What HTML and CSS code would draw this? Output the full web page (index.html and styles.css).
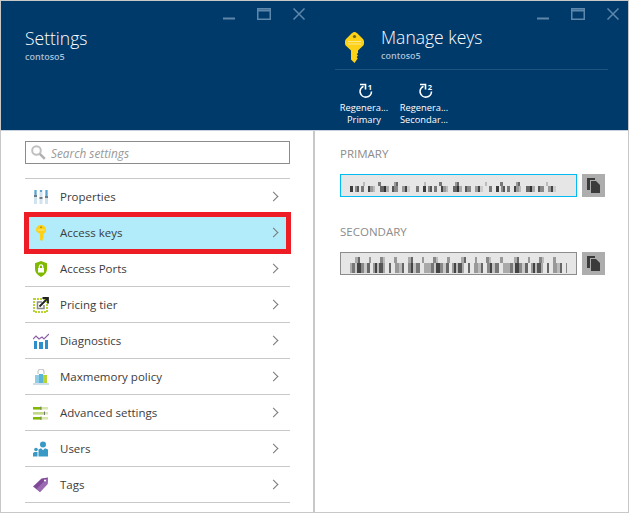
FILE: index.html
```html
<!DOCTYPE html>
<html lang="en">
<head>
<meta charset="UTF-8">
<title>Manage keys</title>
<link rel="stylesheet" href="styles.css">
</head>
<body>
<div class="portal">

  <section class="blade blade-settings">
    <header class="blade-head">
      <div class="win-btns">
        <svg width="12" height="12" viewBox="0 0 12 12"><path d="M0 10.5h12" stroke="#5d87ab" stroke-width="2"/></svg>
        <svg width="14" height="12" viewBox="0 0 14 12"><path d="M.75.75h12.5v10.5H.75z" fill="none" stroke="#5d87ab" stroke-width="1.5"/><path d="M1 2.5h12" stroke="#5d87ab" stroke-width="2"/></svg>
        <svg width="12" height="12" viewBox="0 0 12 12"><path d="M.5.5l11 11M11.5.5l-11 11" stroke="#5d87ab" stroke-width="1.5"/></svg>
      </div>
      <h1>Settings</h1>
      <p class="sub">contoso5</p>
    </header>
    <div class="blade-body">
      <div class="search">
        <svg width="15" height="15" viewBox="0 0 15 15"><circle cx="5.500" cy="5.500" r="4.300" fill="none" stroke="#c0c0c0" stroke-width="2"/><path d="M8.800 8.800l5 5" stroke="#b0b0b0" stroke-width="2.500"/></svg>
        <span>Search settings</span>
      </div>
      <ul class="menu">
        <li><svg width="16" height="16" viewBox="0 0 16 16"><path d="M2.500 1v14M8 1v14M13.500 1v14" stroke="#cfe4ef" stroke-width="3"/><path d="M2.500 1v5M8 1v2M13.500 1v6" stroke="#59a5d0" stroke-width="2"/><path d="M1 7h3M6.500 9h3M12 8h3" stroke="#505a62" stroke-width="1.500"/></svg><span>Properties</span></li>
        <li class="active"><svg width="16" height="16" viewBox="0 0 16 16"><path d="M8 0a5 5 0 0 1 5 5c0 1.800-1 3-2.500 3.800V13L9.500 14l.5 1-1.500 1L7 14.800V8.800C5 8 3 6.800 3 5a5 5 0 0 1 5-5z" fill="#fcd116"/><circle cx="8" cy="2.300" r=".8" fill="#8a7514"/><path d="M4.500 5h7" stroke="#fee88a"/></svg><span>Access keys</span></li>
        <li><svg width="16" height="16" viewBox="0 0 16 16"><path d="M8 0l6 2.200V8c0 3.500-3 6.500-6 8-3-1.500-6-4.500-6-8V2.200z" fill="#7fba00"/><rect x="5" y="7" width="6" height="4.500" fill="#fff"/><path d="M6.300 7V5.500a1.700 1.700 0 0 1 3.400 0V7" fill="none" stroke="#fff" stroke-width="1.200"/></svg><span>Access Ports</span></li>
        <li><svg width="16" height="16" viewBox="0 0 16 16"><path d="M1 2h13v13H1z" fill="none" stroke="#b8d432" stroke-width="2" stroke-dasharray="2 1"/><path d="M9 5H4.500v6.500H11V8" fill="none" stroke="#8a8a8a" stroke-width="1.500"/><path d="M6.500 9.500L14 2M9.500 1H15v5.500" fill="none" stroke="#222" stroke-width="1.800"/></svg><span>Pricing tier</span></li>
        <li><svg width="16" height="16" viewBox="0 0 16 16"><path d="M1 8h3v8H1zM6 9h4v7H6zM12 7h3v9h-3z" fill="#2f8fca"/><path d="M0 6l3-3 3 3 3-2 2 2 5-5" fill="none" stroke="#8c5fa8" stroke-width="1.200"/></svg><span>Diagnostics</span></li>
        <li><svg width="16" height="16" viewBox="0 0 16 16"><path d="M5 5V3a3 3 0 0 1 6 0v2" fill="none" stroke="#c8c8c8" stroke-width="1.300"/><path d="M0 14h16v2H0z" fill="#cfdfe8"/><path d="M2 6h4v8H2z" fill="#8fcde6"/><path d="M6 5h4v9H6z" fill="#59b4d9"/><path d="M10 6h4v8h-4z" fill="#b8d432"/></svg><span>Maxmemory policy</span></li>
        <li><svg width="16" height="16" viewBox="0 0 16 16"><path d="M0 2h15v2.500H0zM0 7h15v2.500H0zM0 12h15v2.500H0z" fill="#d9e6b0"/><path d="M0 2h8v2.500H0zM0 12h8v2.500H0z" fill="#7fba00"/><path d="M0 7h11v2.500H0z" fill="#c3d98a"/><path d="M8 1.500v3.500M11.500 6.500v3.500M8 11.500v3.500" stroke="#777"/></svg><span>Advanced settings</span></li>
        <li><svg width="16" height="16" viewBox="0 0 16 16"><circle cx="10" cy="3.500" r="3" fill="#3999c6"/><path d="M5.500 15.500V8.500l2.500-1.200 2 2 2-2 3 1.200v7z" fill="#3999c6"/><circle cx="3" cy="8.500" r="1.800" fill="#3999c6"/><path d="M0 15.500V12l1.500-1h3v4.500z" fill="#3999c6"/></svg><span>Users</span></li>
        <li><svg width="16" height="16" viewBox="0 0 16 16"><path d="M0 9.500L8.500 1.500 15 .5l-.5 6.500L7 15z" fill="#804998"/><path d="M15 .5l-.5 6.500L7 15 3.500 12z" fill="#9b6bb0"/><circle cx="12" cy="3.500" r="1.100" fill="#fff"/></svg><span>Tags</span></li>
      </ul>
    </div>
  </section>

  <section class="blade blade-keys">
    <header class="blade-head">
      <div class="win-btns">
        <svg width="12" height="12" viewBox="0 0 12 12"><path d="M0 10.5h12" stroke="#5d87ab" stroke-width="2"/></svg>
        <svg width="14" height="12" viewBox="0 0 14 12"><path d="M.75.75h12.5v10.5H.75z" fill="none" stroke="#5d87ab" stroke-width="1.5"/><path d="M1 2.5h12" stroke="#5d87ab" stroke-width="2"/></svg>
        <svg width="12" height="12" viewBox="0 0 12 12"><path d="M.5.5l11 11M11.5.5l-11 11" stroke="#5d87ab" stroke-width="1.5"/></svg>
      </div>
      <div class="title-row">
        <svg width="19" height="31" viewBox="0 0 19 31"><path d="M9.500 0c1 0 2 .6 3 1.600l5.500 5.400c.7.700 1 1.500 1 2.500v2c0 1.200-.6 2-1.500 2.800L13 18.500V21l-1.300 1.300L13 23.500 11.700 25l1 1.400L9.500 31 6 27.500v-9l-4.500-4.200C.6 13.500 0 12.700 0 11.500v-2c0-1 .3-1.800 1-2.500l5.500-5.400c1-1 2-1.600 3-1.600z" fill="#fcd116"/><circle cx="9.500" cy="4.500" r="1.600" fill="#6f6420"/><path d="M3 9.500h13M3 12h13" stroke="#fee88a"/></svg>
        <div>
          <h1>Manage keys</h1>
          <p class="sub">contoso5</p>
        </div>
      </div>
      <div class="commands">
        <div class="cmd">
          <span class="cmd-icon"><svg width="14" height="15" viewBox="0 0 14 15"><path d="M12.500 8.500A5.700 5.700 0 1 1 4.500 3.200" fill="none" stroke="#fff" stroke-width="1.600"/><path d="M1 1.500h5.500v5" fill="none" stroke="#fff" stroke-width="1.600"/></svg><b>1</b></span>
          <span>Regenera...</span>
          <span>Primary</span>
        </div>
        <div class="cmd">
          <span class="cmd-icon"><svg width="14" height="15" viewBox="0 0 14 15"><path d="M12.500 8.500A5.700 5.700 0 1 1 4.500 3.200" fill="none" stroke="#fff" stroke-width="1.600"/><path d="M1 1.500h5.500v5" fill="none" stroke="#fff" stroke-width="1.600"/></svg><b>2</b></span>
          <span>Regenera...</span>
          <span>Secondar...</span>
        </div>
      </div>
    </header>
    <div class="blade-body keys-body">
      <div class="key-group">
        <label>PRIMARY</label>
        <div class="key-row">
          <div class="key-box focus"><i class="blur"></i></div>
          <button class="copy"><svg width="13" height="15" viewBox="0 0 13 15"><path d="M0 0h8v2H3v10H0z" fill="#3b3b3b"/><path d="M4 3h5l4 4v8H4z" fill="#3b3b3b"/></svg></button>
        </div>
      </div>
      <div class="key-group">
        <label>SECONDARY</label>
        <div class="key-row">
          <div class="key-box"><i class="blur blur-2"></i></div>
          <button class="copy"><svg width="13" height="15" viewBox="0 0 13 15"><path d="M0 0h8v2H3v10H0z" fill="#3b3b3b"/><path d="M4 3h5l4 4v8H4z" fill="#3b3b3b"/></svg></button>
        </div>
      </div>
    </div>
  </section>

</div>
</body>
</html>
```

FILE: styles.css
```css
* {
    box-sizing: border-box;
}
html, body {
    margin: 0;
    padding: 0;
}
body {
    width: 629px;
    height: 514px;
    overflow: hidden;
    background: #fff;
    font-family: "Open Sans", "Noto Sans", sans-serif;
}
.portal {
    display: flex;
    height: 513px;
    border: 1px solid #c8c8c8;
}
.blade {
    display: flex;
    flex-direction: column;
}
.blade-settings {
    flex: none;
    width: 314px;
    border-right: 2px solid #c8c8c8;
}
.blade-keys {
    flex: 1;
    min-width: 0;
}
.blade-head {
    position: relative;
    height: 130px;
    background: #003a6b;
    border-bottom: 1px solid #c6d2dd;
    color: #fff;
    padding: 25px 0 0 24px;
}
.blade-settings .blade-head {
    margin-right: -2px;
}
.blade-keys .blade-head {
    padding: 24px 20px 0 20px;
}
.win-btns {
    position: absolute;
    top: 7px;
    right: 9px;
    display: flex;
    gap: 22px;
}
.blade-settings .win-btns {
    right: 10px;
}
h1 {
    margin: 0;
    font-size: 17.5px;
    font-weight: 300;
    line-height: 24px;
}
.sub {
    margin: 1px 0 0;
    font-size: 9px;
    line-height: 12px;
    font-weight: 600;
    color: #a9bfd2;
}
.title-row {
    display: flex;
    gap: 17px;
    padding-left: 10px;
    align-items: flex-start;
    height: 44px;
}
.title-row svg {
    margin-top: 7px;
}
.commands {
    display: flex;
    gap: 8px;
    border-top: 1px solid #1d5480;
    padding: 13px 0 0 3px;
}
.cmd {
    width: 52px;
    display: flex;
    flex-direction: column;
    align-items: center;
    font-size: 9.3px;
    line-height: 12px;
    white-space: nowrap;
}
.cmd-icon {
    display: flex;
    height: 15px;
    margin-bottom: 4px;
    margin-left: 3px;
}
.cmd-icon b {
    font-size: 7.5px;
    line-height: 8px;
    margin-left: -5px;
}
.blade-body {
    flex: 1;
    padding: 10px 23px 0 24px;
}
.search {
    display: flex;
    align-items: center;
    gap: 5px;
    height: 23px;
    padding-left: 5px;
    border: 1px solid #8c8c8c;
    font-size: 11.8px;
    font-style: italic;
    color: #999;
}
.menu {
    list-style: none;
    margin: 14px 0 0;
    padding: 0;
    border-top: 1px solid #c8c8c8;
}
.menu li {
    display: flex;
    align-items: center;
    height: 36px;
    padding-left: 8px;
    border-bottom: 1px solid #c8c8c8;
    font-size: 11.5px;
    color: #3c3c3c;
    position: relative;
}
.menu li span {
    margin-left: 11px;
}
.menu li::after {
    content: "";
    position: absolute;
    right: 13px;
    top: 14px;
    width: 6px;
    height: 6px;
    border-top: 1px solid #777;
    border-right: 1px solid #777;
    transform: rotate(45deg);
}
.menu li.active {
    background: #b2ebfa;
}
.menu li.active::before {
    content: "";
    position: absolute;
    top: -3px;
    bottom: -4px;
    left: -1px;
    right: -1px;
    border: 5px solid #ee1c25;
}
.keys-body {
    padding: 15px 23px 0 25px;
}
.key-group {
    margin-bottom: 27px;
}
.key-group label {
    display: block;
    font-size: 11.5px;
    line-height: 16px;
    color: #8c8c8c;
    margin-bottom: 12px;
}
.key-row {
    display: flex;
    gap: 5px;
}
.key-box {
    width: 238px;
    height: 23px;
    border: 1px solid #8c8c8c;
    background: #e6e6e6;
    display: flex;
    align-items: center;
    padding: 0 9px;
}
.key-box.focus {
    border-color: #00bcf2;
    padding-right: 15px;
}
/* the keys are pixelated out in the screenshot, so two layers of hard stops stand in */
.blur {
    display: block;
    width: 100%;
    height: 10px;
    margin-top: 2px;
    background-repeat: repeat-x;
    background-position: 0 100%, 0 0;
    background-size: 73px 6px, 61px 4px;
    background-image:
        linear-gradient(90deg, #3c3c3c 0 3px, #e6e6e6 3px 5px, #8a8a8a 5px 7px, #555 7px 9px, #e6e6e6 9px 11px, #777 11px 14px, #e6e6e6 14px 18px, #444 18px 20px, #999 20px 23px, #bbb 23px 25px, #e6e6e6 25px 30px, #666 30px 34px, #333 34px 36px, #aaa 36px 39px, #e6e6e6 39px 42px, #555 42px 44px, #888 44px 48px, #e6e6e6 48px 52px, #999 52px 55px, #444 55px 57px, #ccc 57px 60px, #e6e6e6 60px 66px, #777 66px 69px, #e6e6e6 69px 73px),
        linear-gradient(90deg, #e6e6e6 0 13px, #bbb 13px 15px, #e6e6e6 15px 28px, #777 28px 31px, #e6e6e6 31px 44px, #999 44px 46px, #666 46px 48px, #e6e6e6 48px 61px);
}
.blur-2 {
    height: 16px;
    background-position: 0 100%, 0 0;
    background-size: 79px 10px, 53px 6px;
    background-image:
        linear-gradient(90deg, #aaa 0 2px, #777 2px 5px, #c8c8c8 5px 7px, #444 7px 11px, #888 11px 14px, #c8c8c8 14px 17px, #666 17px 20px, #e6e6e6 20px 23px, #999 23px 25px, #444 25px 27px, #bbb 27px 29px, #555 29px 33px, #aaa 33px 35px, #e6e6e6 35px 39px, #666 39px 41px, #e6e6e6 41px 45px, #999 45px 49px, #bbb 49px 52px, #666 52px 54px, #e6e6e6 54px 58px, #888 58px 61px, #444 61px 63px, #c0c0c0 63px 66px, #777 66px 70px, #e6e6e6 70px 74px, #aaa 74px 79px),
        linear-gradient(90deg, #e6e6e6 0 5px, #aaa 5px 8px, #666 8px 10px, #e6e6e6 10px 19px, #999 19px 21px, #e6e6e6 21px 30px, #888 30px 33px, #bbb 33px 35px, #e6e6e6 35px 44px, #999 44px 47px, #e6e6e6 47px 53px);
}
.copy {
    flex: none;
    width: 23px;
    height: 23px;
    padding: 0;
    border: 0;
    background: #adadad;
    display: flex;
    align-items: center;
    justify-content: center;
}
```
